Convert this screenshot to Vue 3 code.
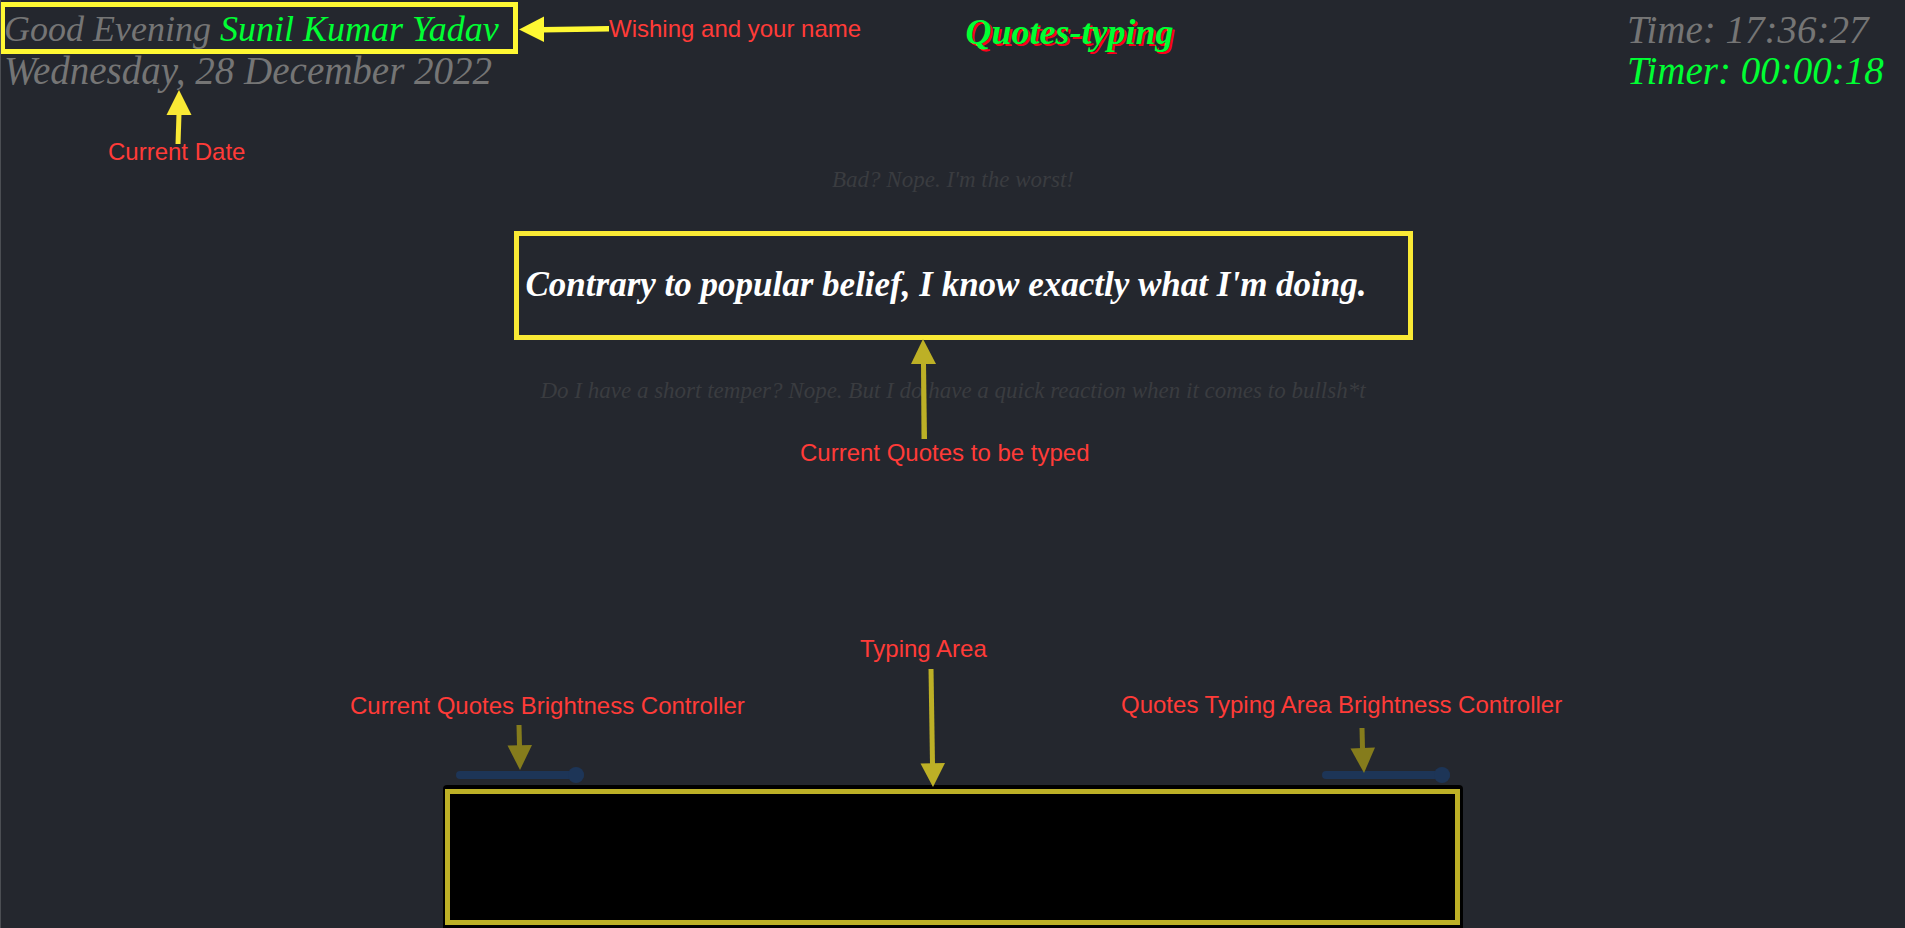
<script setup>
import { ref } from 'vue'

const name = ref('Sunil Kumar Yadav')
const time = ref('17:36:27')
const timer = ref('00:00:18')
const quoteBrightness = ref(100)
const typingBrightness = ref(100)
const typed = ref('')
</script>

<template>
  <main class="page">
    <header class="header">
      <div class="welcome">
        <p class="greeting">
          Good Evening <span class="name">{{ name }}</span>
          <span class="note note-wish">
            <svg width="90" height="26" viewBox="0 0 90 26" fill="#fff833" aria-hidden="true">
              <path d="M0 13.5 25 0.5V26Z" />
              <path d="M24 11 90 10V15.500L24 16.500Z" />
            </svg>
            <span>Wishing and your name</span>
          </span>
        </p>
        <p class="date">
          Wednesday, 28 December 2022
          <span class="note note-date">
            <svg width="26" height="54" viewBox="0 0 26 54" fill="#f9e935" aria-hidden="true">
              <path d="M13 0 25.500 25H0.500Z" />
              <path d="M10.500 24H15.500L14.500 54H9.500Z" />
            </svg>
            <span>Current Date</span>
          </span>
        </p>
      </div>
      <h1 class="title">Quotes-typing</h1>
      <div class="clock">
        <p>Time: {{ time }}</p>
        <p class="timer">Timer: {{ timer }}</p>
      </div>
    </header>

    <section class="quotes">
      <p class="side-quote">Bad? Nope. I'm the worst!</p>
      <p class="quote">Contrary to popular belief, I know exactly what I'm doing.</p>
      <p class="side-quote">Do I have a short temper? Nope. But I do have a quick reaction when it comes to bullsh*t</p>
      <div class="note note-quote">
        <svg width="26" height="100" viewBox="0 0 26 100" fill="#bdb026" aria-hidden="true">
          <path d="M12 0 25 25H0Z" />
          <path d="M10 24H15L16 100H10.500Z" />
        </svg>
        <span>Current Quotes to be typed</span>
      </div>
    </section>

    <section class="typing">
      <div class="note note-typing">
        <label for="typing-area">Typing Area</label>
        <svg width="26" height="118" viewBox="0 0 26 118" fill="#bdb026" aria-hidden="true">
          <path d="M8.500 0H13.500L15 95H10Z" />
          <path d="M0.500 94.500 25 94 13 118Z" />
        </svg>
      </div>
      <div class="controls">
        <div class="control">
          <div class="note note-control">
            <label for="quote-brightness">Current Quotes Brightness Controller</label>
            <svg width="26" height="45" viewBox="0 0 26 45" fill="#857c1c" aria-hidden="true">
              <path d="M9.500 0H14.500L15 21H10Z" />
              <path d="M0.500 20.500 25 20 13 45Z" />
            </svg>
          </div>
          <input id="quote-brightness" v-model="quoteBrightness" class="slider" type="range" min="0" max="100" />
        </div>
        <div class="control">
          <div class="note note-control note-right">
            <label for="typing-brightness">Quotes Typing Area Brightness Controller</label>
            <svg width="26" height="45" viewBox="0 0 26 45" fill="#857c1c" aria-hidden="true">
              <path d="M9.500 0H14.500L15 21H10Z" />
              <path d="M0.500 20.500 25 19.500 14 45Z" />
            </svg>
          </div>
          <input id="typing-brightness" v-model="typingBrightness" class="slider" type="range" min="0" max="100" />
        </div>
      </div>
      <div class="box">
        <textarea id="typing-area" v-model="typed" class="area" spellcheck="false"></textarea>
      </div>
    </section>
  </main>
</template>

<style>
body {
  margin: 0;
  background: #24272e;
}
</style>

<style scoped>
.page {
  box-sizing: border-box;
  display: flex;
  flex-direction: column;
  min-height: 100vh;
  overflow: hidden;
  border-left: 1px solid #4b4e53;
  background: #24272e;
  color: #757575;
  font-family: "Liberation Serif", serif;
  font-style: italic;
}

p,
h1 {
  margin: 0;
}

.header {
  display: flex;
  justify-content: space-between;
  padding: 9px 16px 0 3px;
  font-size: 39px;
  line-height: 41px;
  white-space: nowrap;
}

.greeting,
.date {
  position: relative;
}

.greeting {
  font-size: 36px;
}

.welcome {
  width: 508px;
}

.greeting::after {
  content: "";
  position: absolute;
  inset: -7px -6px -4px -4px;
  border: 5px solid #fff833;
}

.name,
.timer {
  color: #00ff33;
}

.title {
  padding-top: 3px;
  color: #00ff33;
  font-size: 36px;
  line-height: 41px;
  text-shadow: 2px 2px #ff0019;
}

.clock {
  width: 262px;
}

.note {
  position: absolute;
  display: flex;
  color: #ff3b38;
  font: normal 24px/28px "Liberation Sans", Arial, sans-serif;
  white-space: nowrap;
}

.note svg {
  flex: none;
}

.note-wish {
  top: 6px;
  left: 515px;
  align-items: center;
}

.note-date {
  top: 40px;
  left: 104px;
  flex-direction: column;
}

.note-date svg {
  margin-left: 58px;
}

.note-date span {
  margin-top: -6px;
}

.quotes {
  position: relative;
  display: flex;
  flex-direction: column;
  align-items: center;
  padding-top: 74px;
}

.side-quote {
  color: #3a3c40;
  font-size: 23px;
  line-height: 30px;
}

.quote {
  box-sizing: border-box;
  width: 899px;
  margin: 36px 0 36px 20px;
  padding: 29px 7px 30px;
  border: 5px solid #f9e935;
  color: #fff;
  font-size: 35px;
  font-weight: bold;
  line-height: 40px;
  white-space: nowrap;
}

.note-quote {
  top: 248px;
  left: calc(50% - 153px);
  flex-direction: column;
}

.note-quote svg {
  margin-left: 111px;
}

.typing {
  position: relative;
  align-self: center;
  width: 1020px;
  margin-top: auto;
}

.note-typing {
  bottom: 141px;
  left: 417px;
  flex-direction: column;
  gap: 6px;
}

.note-typing svg {
  margin-left: 60px;
}

.controls {
  display: flex;
  justify-content: space-between;
  padding: 0 13px 2px;
}

.control {
  position: relative;
  display: flex;
}

.note-control {
  bottom: 13px;
  left: -106px;
  flex-direction: column;
  gap: 5px;
}

.note-control svg {
  margin-left: 157px;
}

.note-right {
  bottom: 10px;
  left: -201px;
  gap: 9px;
}

.note-right svg {
  margin-left: 229px;
}

.slider {
  width: 128px;
  height: 16px;
  margin: 0;
  appearance: none;
  background: transparent;
}

.slider::-webkit-slider-runnable-track {
  height: 8px;
  border-radius: 4px;
  background: #1d3557;
}

.slider::-webkit-slider-thumb {
  width: 16px;
  height: 16px;
  margin-top: -4px;
  appearance: none;
  border-radius: 50%;
  background: #1d3557;
}

.box {
  display: flex;
  padding: 4px 3px 3px 2px;
  border-radius: 4px 4px 0 0;
  background: #000;
}

.area {
  box-sizing: border-box;
  width: 100%;
  height: 136px;
  padding: 8px;
  border: 5px solid #bdb026;
  outline: none;
  resize: none;
  background: #000;
  color: #fff;
  font: italic 36px/40px "Liberation Serif", serif;
}
</style>
